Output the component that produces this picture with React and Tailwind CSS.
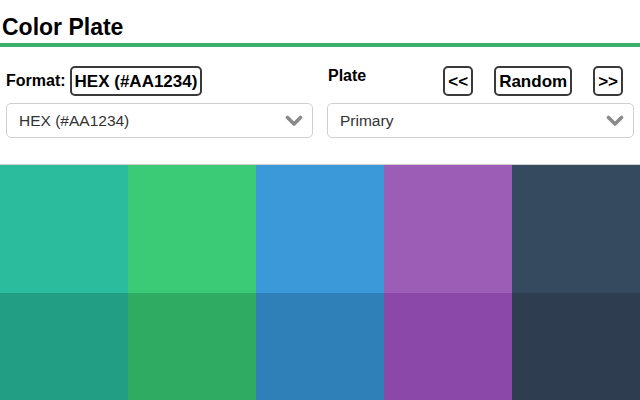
import React, { useState } from 'react';

const PLATES = {
    Primary: [
        ['#2bbb9d', '#3bcb77', '#3b99d9', '#9b5db5', '#354a5f'],
        ['#229e84', '#30ab62', '#2f80b8', '#8c48a9', '#2e3e50'],
    ],
};

function Chevron() {
    return (
        <svg width="18" height="12" viewBox="0 0 18 12" className="absolute right-[9px] top-1/2 -translate-y-1/2 pointer-events-none">
            <path d="M2.5 2.5 L9 9 L15.5 2.5" fill="none" stroke="#8a8a8a" strokeWidth="3.6" strokeLinecap="round" strokeLinejoin="round" />
        </svg>
    );
}

function Select({ value }) {
    return (
        <div className="relative h-[35px] border border-[#cfcfcf] rounded-[5px] bg-white flex items-center pl-3 text-[15.5px] text-[#333]">
            {value}
            <Chevron />
        </div>
    );
}

function ChipButton({ children }) {
    return (
        <button className="h-[30px] px-[3px] border-2 border-[#3a3a3a] rounded-[5px] bg-white text-[17px] font-bold text-black leading-none">
            {children}
        </button>
    );
}

export default function App() {
    const [format] = useState('HEX (#AA1234)');
    const [plate] = useState('Primary');
    const rows = PLATES[plate];

    return (
        <div className="w-[640px] h-[400px] overflow-hidden bg-white" style={{ fontFamily: '"Liberation Sans", Arial, sans-serif' }}>
            <h1 className="text-[23px] leading-[28px] font-bold text-black px-[2px] pt-[13px] pb-[2px] border-b-4 border-[#3bb06a]">
                Color Plate
            </h1>

            <div className="grid grid-cols-2 gap-[14px] px-[6px] pt-[19px]">
                <div className="flex flex-col gap-[7px]">
                    <div className="flex items-center gap-1 h-[30px]">
                        <span className="text-[16px] font-bold">Format:</span>
                        <ChipButton>{format}</ChipButton>
                    </div>
                    <Select value={format} />
                </div>
                <div className="flex flex-col gap-[7px]">
                    <div className="flex items-center h-[30px]">
                        <span className="text-[16px] font-bold pl-[1px] -mt-[10px]">Plate</span>
                        <div className="ml-auto mr-[11px] flex items-center gap-[21px]">
                            <ChipButton>&lt;&lt;</ChipButton>
                            <ChipButton>Random</ChipButton>
                            <ChipButton>&gt;&gt;</ChipButton>
                        </div>
                    </div>
                    <Select value={plate} />
                </div>
            </div>

            <div className="mt-[26px] border-t border-[#d0d0d0]">
                {rows.map((row, i) => (
                    <div key={i} className="grid grid-cols-5 h-[128px]">
                        {row.map(c => (
                            <div key={c} style={{ backgroundColor: c }} />
                        ))}
                    </div>
                ))}
            </div>
        </div>
    );
}
